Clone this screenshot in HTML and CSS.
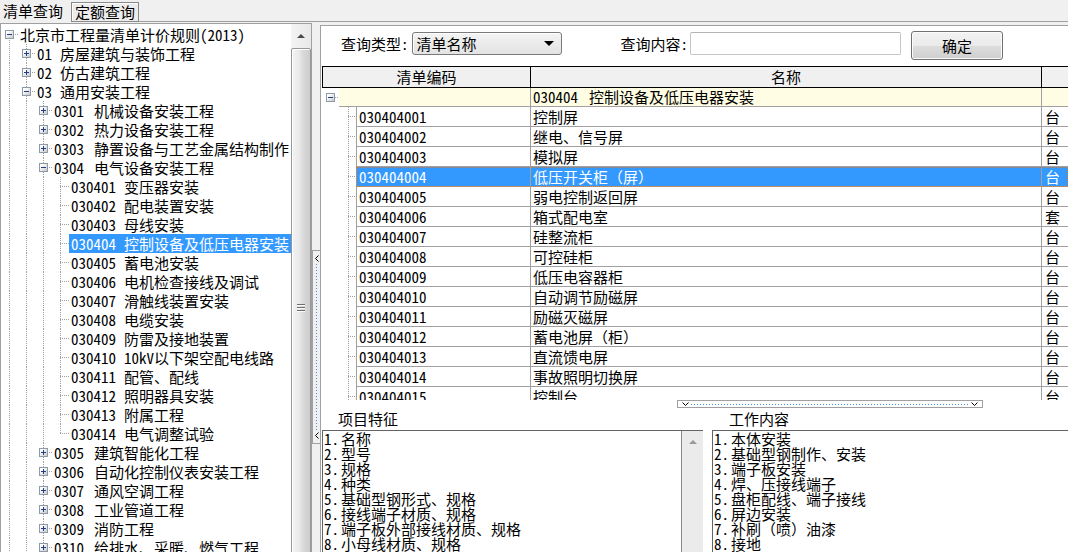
FILE: index.html
```html
<!DOCTYPE html>
<html lang="zh-CN">
<head>
<meta charset="utf-8">
<title>清单查询</title>
<link rel="stylesheet" href="styles.css">
</head>
<body>
<div class="app">
  <div class="tabs">
    <div class="tab tab-on">清单查询</div>
    <div class="tab tab-off">定额查询</div>
  </div>
  <div class="main">
    <div class="left">
      <div class="tree">
        <div class="tn"><span class="cn rt"><b class="bx m"></b></span><span class="tl">北京市工程量清单计价规则(2013)</span></div>
        <div class="tn"><span class="ind"></span><span class="cn"><b class="bx p"></b></span><span class="tl"><span class="k k2">01</span>房屋建筑与装饰工程</span></div>
        <div class="tn"><span class="ind"></span><span class="cn"><b class="bx p"></b></span><span class="tl"><span class="k k2">02</span>仿古建筑工程</span></div>
        <div class="tn"><span class="ind"></span><span class="cn"><b class="bx m"></b></span><span class="tl"><span class="k k2">03</span>通用安装工程</span></div>
        <div class="tn"><span class="ind"></span><span class="ind"></span><span class="cn"><b class="bx p"></b></span><span class="tl"><span class="k k4">0301</span>机械设备安装工程</span></div>
        <div class="tn"><span class="ind"></span><span class="ind"></span><span class="cn"><b class="bx p"></b></span><span class="tl"><span class="k k4">0302</span>热力设备安装工程</span></div>
        <div class="tn"><span class="ind"></span><span class="ind"></span><span class="cn"><b class="bx p"></b></span><span class="tl"><span class="k k4">0303</span>静置设备与工艺金属结构制作</span></div>
        <div class="tn"><span class="ind"></span><span class="ind"></span><span class="cn"><b class="bx m"></b></span><span class="tl"><span class="k k4">0304</span>电气设备安装工程</span></div>
        <div class="tn"><span class="ind"></span><span class="ind"></span><span class="ind"></span><span class="cn"></span><span class="tl"><span class="k k6">030401</span>变压器安装</span></div>
        <div class="tn"><span class="ind"></span><span class="ind"></span><span class="ind"></span><span class="cn"></span><span class="tl"><span class="k k6">030402</span>配电装置安装</span></div>
        <div class="tn"><span class="ind"></span><span class="ind"></span><span class="ind"></span><span class="cn"></span><span class="tl"><span class="k k6">030403</span>母线安装</span></div>
        <div class="tn"><span class="ind"></span><span class="ind"></span><span class="ind"></span><span class="cn"></span><span class="tl tl-on"><span class="k k6">030404</span>控制设备及低压电器安装</span></div>
        <div class="tn"><span class="ind"></span><span class="ind"></span><span class="ind"></span><span class="cn"></span><span class="tl"><span class="k k6">030405</span>蓄电池安装</span></div>
        <div class="tn"><span class="ind"></span><span class="ind"></span><span class="ind"></span><span class="cn"></span><span class="tl"><span class="k k6">030406</span>电机检查接线及调试</span></div>
        <div class="tn"><span class="ind"></span><span class="ind"></span><span class="ind"></span><span class="cn"></span><span class="tl"><span class="k k6">030407</span>滑触线装置安装</span></div>
        <div class="tn"><span class="ind"></span><span class="ind"></span><span class="ind"></span><span class="cn"></span><span class="tl"><span class="k k6">030408</span>电缆安装</span></div>
        <div class="tn"><span class="ind"></span><span class="ind"></span><span class="ind"></span><span class="cn"></span><span class="tl"><span class="k k6">030409</span>防雷及接地装置</span></div>
        <div class="tn"><span class="ind"></span><span class="ind"></span><span class="ind"></span><span class="cn"></span><span class="tl"><span class="k k6">030410</span>10kV以下架空配电线路</span></div>
        <div class="tn"><span class="ind"></span><span class="ind"></span><span class="ind"></span><span class="cn"></span><span class="tl"><span class="k k6">030411</span>配管、配线</span></div>
        <div class="tn"><span class="ind"></span><span class="ind"></span><span class="ind"></span><span class="cn"></span><span class="tl"><span class="k k6">030412</span>照明器具安装</span></div>
        <div class="tn"><span class="ind"></span><span class="ind"></span><span class="ind"></span><span class="cn"></span><span class="tl"><span class="k k6">030413</span>附属工程</span></div>
        <div class="tn"><span class="ind"></span><span class="ind"></span><span class="ind"></span><span class="cn end"></span><span class="tl"><span class="k k6">030414</span>电气调整试验</span></div>
        <div class="tn"><span class="ind"></span><span class="ind"></span><span class="cn"><b class="bx p"></b></span><span class="tl"><span class="k k4">0305</span>建筑智能化工程</span></div>
        <div class="tn"><span class="ind"></span><span class="ind"></span><span class="cn"><b class="bx p"></b></span><span class="tl"><span class="k k4">0306</span>自动化控制仪表安装工程</span></div>
        <div class="tn"><span class="ind"></span><span class="ind"></span><span class="cn"><b class="bx p"></b></span><span class="tl"><span class="k k4">0307</span>通风空调工程</span></div>
        <div class="tn"><span class="ind"></span><span class="ind"></span><span class="cn"><b class="bx p"></b></span><span class="tl"><span class="k k4">0308</span>工业管道工程</span></div>
        <div class="tn"><span class="ind"></span><span class="ind"></span><span class="cn"><b class="bx p"></b></span><span class="tl"><span class="k k4">0309</span>消防工程</span></div>
        <div class="tn"><span class="ind"></span><span class="ind"></span><span class="cn"><b class="bx p"></b></span><span class="tl"><span class="k k4">0310</span>给排水、采暖、燃气工程</span></div>
      </div>
      <div class="vscroll">
        <div class="sb-btn"><i class="tri-up"></i></div>
        <div class="sb-thumb"><i class="grip"></i></div>
      </div>
    </div>

    <div class="splitter">
      <div class="toggle">
        <svg class="chev" width="4" height="7" viewBox="0 0 4 7"><path d="M3.5 0.5 L0.5 3.5 L3.5 6.5" fill="none" stroke="#000"/></svg>
        <div class="vdots"></div>
        <svg class="chev" width="4" height="7" viewBox="0 0 4 7"><path d="M3.5 0.5 L0.5 3.5 L3.5 6.5" fill="none" stroke="#000"/></svg>
      </div>
    </div>

    <div class="right">
      <div class="query">
        <span class="qlabel">查询类型:</span>
        <div class="combo"><span>清单名称</span><i class="caret"></i></div>
        <span class="qlabel ql2">查询内容:</span>
        <div class="inp"></div>
        <button class="btn" type="button">确定</button>
      </div>

      <div class="grid">
        <div class="ghead">
          <div class="hc h1">清单编码</div>
          <div class="hc h2">名称</div>
          <div class="hc h3"></div>
        </div>
        <div class="gr grp">
          <div class="gut"><b class="bx m"></b></div>
          <div class="cells"><div class="gc c1"></div><div class="gc c2"><span class="k kg">030404</span>控制设备及低压电器安装</div><div class="gc c3"></div></div>
        </div>
        <div class="gr"><div class="gut"></div><div class="cells"><div class="gc c1">030404001</div><div class="gc c2">控制屏</div><div class="gc c3">台</div></div></div>
        <div class="gr"><div class="gut"></div><div class="cells"><div class="gc c1">030404002</div><div class="gc c2">继电、信号屏</div><div class="gc c3">台</div></div></div>
        <div class="gr"><div class="gut"></div><div class="cells"><div class="gc c1">030404003</div><div class="gc c2">模拟屏</div><div class="gc c3">台</div></div></div>
        <div class="gr gr-on"><div class="gut"></div><div class="cells"><div class="gc c1">030404004</div><div class="gc c2">低压开关柜（屏）</div><div class="gc c3">台</div></div></div>
        <div class="gr"><div class="gut"></div><div class="cells"><div class="gc c1">030404005</div><div class="gc c2">弱电控制返回屏</div><div class="gc c3">台</div></div></div>
        <div class="gr"><div class="gut"></div><div class="cells"><div class="gc c1">030404006</div><div class="gc c2">箱式配电室</div><div class="gc c3">套</div></div></div>
        <div class="gr"><div class="gut"></div><div class="cells"><div class="gc c1">030404007</div><div class="gc c2">硅整流柜</div><div class="gc c3">台</div></div></div>
        <div class="gr"><div class="gut"></div><div class="cells"><div class="gc c1">030404008</div><div class="gc c2">可控硅柜</div><div class="gc c3">台</div></div></div>
        <div class="gr"><div class="gut"></div><div class="cells"><div class="gc c1">030404009</div><div class="gc c2">低压电容器柜</div><div class="gc c3">台</div></div></div>
        <div class="gr"><div class="gut"></div><div class="cells"><div class="gc c1">030404010</div><div class="gc c2">自动调节励磁屏</div><div class="gc c3">台</div></div></div>
        <div class="gr"><div class="gut"></div><div class="cells"><div class="gc c1">030404011</div><div class="gc c2">励磁灭磁屏</div><div class="gc c3">台</div></div></div>
        <div class="gr"><div class="gut"></div><div class="cells"><div class="gc c1">030404012</div><div class="gc c2">蓄电池屏（柜）</div><div class="gc c3">台</div></div></div>
        <div class="gr"><div class="gut"></div><div class="cells"><div class="gc c1">030404013</div><div class="gc c2">直流馈电屏</div><div class="gc c3">台</div></div></div>
        <div class="gr"><div class="gut"></div><div class="cells"><div class="gc c1">030404014</div><div class="gc c2">事故照明切换屏</div><div class="gc c3">台</div></div></div>
        <div class="gr"><div class="gut"></div><div class="cells"><div class="gc c1">030404015</div><div class="gc c2">控制台</div><div class="gc c3">台</div></div></div>
      </div>

      <div class="hsplit">
        <div class="htoggle">
          <svg class="chev" width="7" height="4" viewBox="0 0 7 4"><path d="M0.5 0.5 L3.5 3.5 L6.5 0.5" fill="none" stroke="#000"/></svg>
          <div class="hdots"></div>
          <svg class="chev" width="7" height="4" viewBox="0 0 7 4"><path d="M0.5 0.5 L3.5 3.5 L6.5 0.5" fill="none" stroke="#000"/></svg>
        </div>
      </div>

      <div class="bottom">
        <div class="pane pane1">
          <div class="plabel">项目特征</div>
          <div class="tbox">
            <div class="ttext"><span class="n">1.</span>名称<br><span class="n">2.</span>型号<br><span class="n">3.</span>规格<br><span class="n">4.</span>种类<br><span class="n">5.</span>基础型钢形式、规格<br><span class="n">6.</span>接线端子材质、规格<br><span class="n">7.</span>端子板外部接线材质、规格<br><span class="n">8.</span>小母线材质、规格</div>
            <div class="tscroll"><i class="tri-up light"></i></div>
          </div>
        </div>
        <div class="pane pane2">
          <div class="plabel">工作内容</div>
          <div class="tbox">
            <div class="ttext"><span class="n">1.</span>本体安装<br><span class="n">2.</span>基础型钢制作、安装<br><span class="n">3.</span>端子板安装<br><span class="n">4.</span>焊、压接线端子<br><span class="n">5.</span>盘柜配线、端子接线<br><span class="n">6.</span>屏边安装<br><span class="n">7.</span>补刷（喷）油漆<br><span class="n">8.</span>接地</div>
          </div>
        </div>
      </div>
    </div>
  </div>
</div>
</body>
</html>
```

FILE: styles.css
```css
* { box-sizing: border-box; }
html, body { margin: 0; padding: 0; }
body {
  background: #f0f0f0;
  color: #000;
  font-family: "Noto Sans Mono CJK SC", "Noto Sans CJK SC", sans-serif;
  font-size: 15px;
  line-height: 19px;
  overflow: hidden;
}
.app {
  width: 1068px;
  height: 552px;
  display: flex;
  flex-direction: column;
  overflow: hidden;
}

/* fixed-width code columns (half-width digit metrics) */
.k { display: inline-block; white-space: nowrap; }
.k2 { width: 23px; }
.k4 { width: 40px; }
.k6 { width: 53px; }
.kg { width: 56px; }
.n { display: inline-block; width: 17px; }

/* tabs */
.tabs {
  flex: none;
  height: 22px;
  display: flex;
  align-items: flex-start;
  border-bottom: 1px solid #a0a0a0;
}
.tab { white-space: nowrap; }
.tab-on {
  width: 71px;
  height: 22px;
  padding-left: 3px;
  line-height: 21px;
  background: #f0f0f0;
}
.tab-off {
  width: 68px;
  height: 20px;
  margin-top: 2px;
  border: 1px solid #8a8a8a;
  box-shadow: inset 1px 1px 0 #fff;
  background: #ececec;
  text-align: center;
  line-height: 18px;
}

/* main area */
.main {
  flex: 1;
  display: flex;
  min-height: 0;
}
.left {
  flex: none;
  width: 312px;
  margin-top: 1px;
  border: 1px solid #a0a0a0;
  border-bottom: none;
  background: #fff;
  display: flex;
  overflow: hidden;
}
.tree {
  flex: 1;
  min-width: 0;
  overflow: hidden;
  padding-top: 1px;
  white-space: nowrap;
}
.tn {
  display: flex;
  height: 19px;
}
.ind, .cn {
  flex: none;
  width: 17px;
  height: 19px;
  display: flex;
  align-items: center;
  justify-content: center;
}
.ind {
  background: repeating-linear-gradient(to bottom, #a0a0a0 0 1px, transparent 1px 2px) 8px 0 / 1px 100% no-repeat;
}
.cn {
  background:
    repeating-linear-gradient(to right, #a0a0a0 0 1px, transparent 1px 2px) 8px 9px / 9px 1px no-repeat,
    repeating-linear-gradient(to bottom, #a0a0a0 0 1px, transparent 1px 2px) 8px 0 / 1px 100% no-repeat;
}
.cn.end {
  background:
    repeating-linear-gradient(to right, #a0a0a0 0 1px, transparent 1px 2px) 8px 9px / 9px 1px no-repeat,
    repeating-linear-gradient(to bottom, #a0a0a0 0 1px, transparent 1px 2px) 8px 0 / 1px 10px no-repeat;
}
.cn.rt {
  background:
    repeating-linear-gradient(to right, #a0a0a0 0 1px, transparent 1px 2px) 8px 9px / 9px 1px no-repeat,
    repeating-linear-gradient(to bottom, #a0a0a0 0 1px, transparent 1px 2px) 8px 9px / 1px 10px no-repeat;
}
.bx {
  display: block;
  width: 9px;
  height: 9px;
  border: 1px solid #8f9aa8;
  flex: none;
}
.bx.p {
  background:
    linear-gradient(#1f3f86, #1f3f86) center / 5px 1px no-repeat,
    linear-gradient(#1f3f86, #1f3f86) center / 1px 5px no-repeat,
    linear-gradient(135deg, #ffffff 20%, #c9c9c9);
}
.bx.m {
  background:
    linear-gradient(#1f3f86, #1f3f86) center / 5px 1px no-repeat,
    linear-gradient(135deg, #ffffff 20%, #c9c9c9);
}
.tl {
  padding: 0 2px;
  line-height: 19px;
  white-space: nowrap;
}
.tl-on {
  background: #3399ff;
  color: #fff;
}

/* tree scrollbar */
.vscroll {
  flex: none;
  width: 20px;
  background: #ececec;
  display: flex;
  flex-direction: column;
}
.sb-btn {
  flex: none;
  height: 24px;
  display: flex;
  align-items: center;
  justify-content: center;
  background: linear-gradient(to right, #f4f4f4, #e8e8e8);
}
.tri-up {
  display: block;
  width: 0;
  height: 0;
  border-left: 4px solid transparent;
  border-right: 4px solid transparent;
  border-bottom: 4px solid #4a4a4a;
}
.tri-up.light { border-bottom-color: #9a9a9a; }
.sb-thumb {
  flex: none;
  height: 520px;
  border: 1px solid #979797;
  border-radius: 2px;
  background: linear-gradient(to right, #f4f4f4 0%, #e9e9e9 40%, #dadada 60%, #cdcdcd 100%);
  box-shadow: inset 1px 1px 0 #fff;
  display: flex;
  align-items: center;
  justify-content: center;
}
.grip {
  display: block;
  width: 8px;
  height: 8px;
  background: repeating-linear-gradient(to bottom, #6e6e6e 0 1px, #fafafa 1px 2px, transparent 2px 3px);
}

/* vertical splitter */
.splitter {
  flex: none;
  width: 8px;
}
.toggle {
  margin-top: 228px;
  height: 194px;
  border: 1px solid #a0a0a0;
  border-right: none;
  display: flex;
  flex-direction: column;
  align-items: center;
  padding: 4px 0 4px;
  gap: 2px;
}
.chev { display: block; flex: none; }
.vdots {
  flex: 1;
  width: 1px;
  background: repeating-linear-gradient(to bottom, #3a8ee6 0 1px, transparent 1px 3px);
}

/* right panel */
.right {
  flex: 1;
  min-width: 0;
  margin-top: 3px;
  border-left: 1px solid #a0a0a0;
  border-top: 1px solid #a0a0a0;
  background: #fff;
  display: flex;
  flex-direction: column;
  overflow: hidden;
}
.query {
  flex: none;
  height: 40px;
  display: flex;
  align-items: flex-start;
  padding-left: 20px;
  white-space: nowrap;
}
.qlabel {
  margin-top: 6px;
  line-height: 23px;
}
.ql2 { margin-left: 59px; }
.combo {
  margin-top: 6px;
  margin-left: 3px;
  width: 150px;
  height: 23px;
  border: 1px solid #7a7a7a;
  border-radius: 3px;
  background: linear-gradient(#f4f4f4, #e3e3e3);
  box-shadow: inset 1px 1px 0 #fff;
  display: flex;
  align-items: center;
  justify-content: space-between;
  padding: 0 4px 0 4px;
  line-height: 21px;
}
.caret {
  display: block;
  width: 0;
  height: 0;
  margin-right: 3px;
  border-left: 5px solid transparent;
  border-right: 5px solid transparent;
  border-top: 5px solid #000;
}
.inp {
  margin-top: 6px;
  margin-left: 2px;
  width: 211px;
  height: 23px;
  border: 1px solid #c6c6c6;
  border-top-color: #b4b4b4;
  border-radius: 2px;
  background: #fff;
}
.btn {
  margin-top: 5px;
  margin-left: 10px;
  width: 92px;
  height: 29px;
  padding: 0;
  border: 1px solid #707070;
  border-radius: 3px;
  background: linear-gradient(#f2f2f2 0%, #ebebeb 50%, #dddddd 51%, #cfcfcf 100%);
  box-shadow: inset 0 0 0 1px #fcfcfc;
  font-family: "Noto Sans Mono CJK SC", "Noto Sans CJK SC", sans-serif;
  font-size: 15px;
  color: #000;
}

/* grid */
.grid {
  flex: none;
  height: 334px;
  overflow: hidden;
  white-space: nowrap;
}
.ghead {
  display: flex;
  height: 22px;
  margin-left: 1px;
  border: 1px solid #000;
  border-right: none;
  background: #f0f0f0;
}
.hc {
  line-height: 20px;
  text-align: center;
  border-right: 1px solid #000;
}
.h1 { width: 208px; flex: none; }
.h2 { width: 511px; flex: none; }
.h3 { flex: 1; border-right: none; }

.gr {
  display: flex;
  height: 20px;
}
.gut {
  flex: none;
  width: 35px;
  background:
    repeating-linear-gradient(to right, #a0a0a0 0 1px, transparent 1px 2px) 27px 9px / 8px 1px no-repeat,
    repeating-linear-gradient(to bottom, #a0a0a0 0 1px, transparent 1px 2px) 27px 0 / 1px 100% no-repeat;
}
.cells {
  flex: 1;
  display: flex;
  min-width: 0;
}
.gc {
  flex: none;
  line-height: 19px;
  padding-left: 2px;
  border-bottom: 1px solid #a0a0a0;
  border-right: 1px solid #a0a0a0;
  overflow: hidden;
}
.c1 { width: 175px; border-left: 1px solid #a0a0a0; }
.c2 { width: 511px; }
.c3 { flex: 1; border-right: none; padding-left: 3px; }

.grp { height: 19px; }
.grp .gut {
  width: 18px;
  display: flex;
  align-items: center;
  padding-left: 5px;
  background: repeating-linear-gradient(to right, #a0a0a0 0 1px, transparent 1px 2px) 14px 9px / 4px 1px no-repeat;
}
.grp .gc {
  background: #fffde3;
  line-height: 18px;
}
.grp .c1 { width: 192px; border-left: none; }

.gr-on .cells {
  outline: 1px dotted #d8782a;
  outline-offset: -1px;
}
.gr-on .gc {
  background: #3399ff;
  color: #fff;
}

/* horizontal splitter */
.hsplit {
  flex: none;
  height: 8px;
  padding-left: 356px;
}
.htoggle {
  width: 306px;
  height: 8px;
  border: 1px solid #a0a0a0;
  display: flex;
  align-items: center;
  padding: 0 4px;
  gap: 2px;
}
.hdots {
  flex: 1;
  height: 1px;
  background: repeating-linear-gradient(to right, #3a8ee6 0 1px, transparent 1px 3px);
}

/* bottom panes */
.bottom {
  flex: 1;
  display: flex;
  min-height: 0;
}
.pane {
  display: flex;
  flex-direction: column;
}
.pane1 {
  flex: none;
  width: 391px;
  padding-left: 1px;
  padding-right: 9px;
}
.pane2 {
  flex: 1;
  min-width: 0;
}
.plabel {
  flex: none;
  height: 22px;
  line-height: 22px;
  padding-left: 16px;
}
.pane2 .plabel { padding-left: 17px; }
.tbox {
  flex: 1;
  display: flex;
  border-left: 1px solid #646464;
  border-top: 1px solid #646464;
  overflow: hidden;
}
.ttext {
  flex: 1;
  padding-left: 1px;
  line-height: 15px;
  white-space: nowrap;
}
.tscroll {
  flex: none;
  width: 22px;
  border-left: 1px solid #8a8a8a;
  background: #ebebeb;
  display: flex;
  justify-content: center;
  padding-top: 9px;
}
```
